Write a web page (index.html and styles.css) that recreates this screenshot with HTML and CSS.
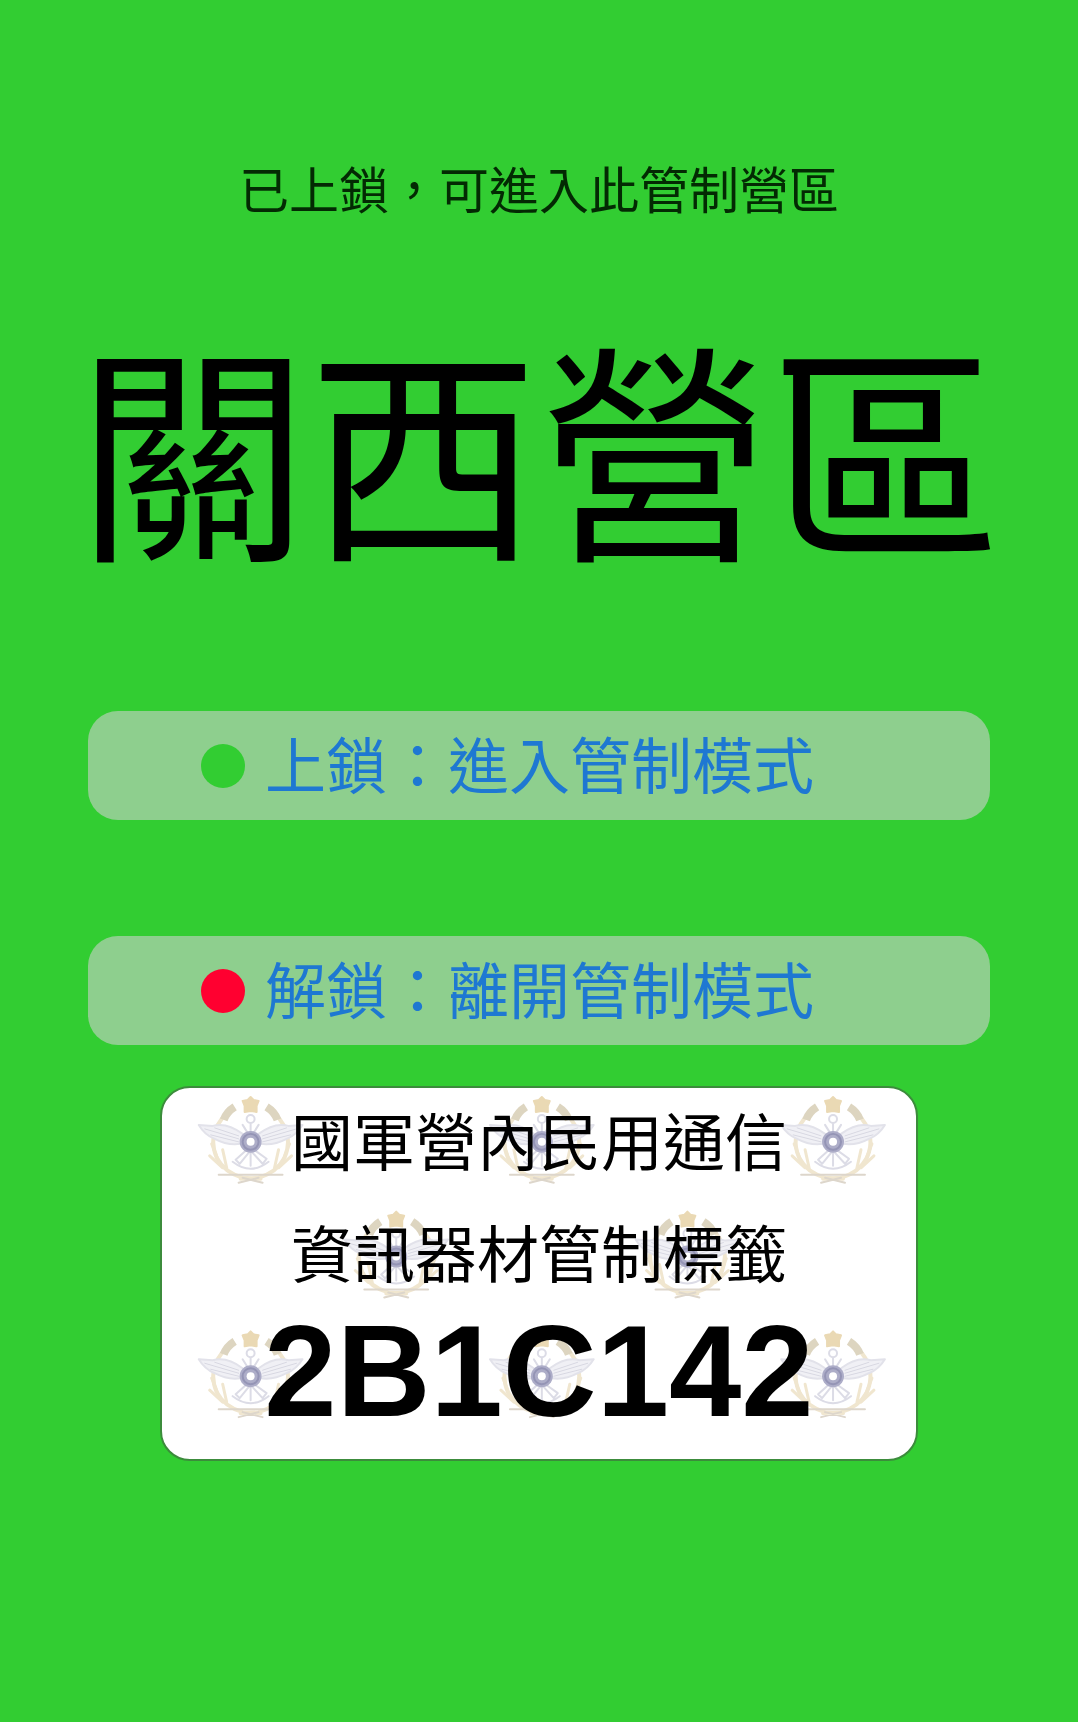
FILE: index.html
```html
<!DOCTYPE html>
<html lang="zh-Hant">
<head>
<meta charset="utf-8">
<meta name="viewport" content="width=device-width, initial-scale=1">
<title>關西營區</title>
<link rel="stylesheet" href="styles.css">
</head>
<body>
<main class="screen">
  <p class="status">已上鎖，可進入此管制營區</p>
  <h1 class="camp">關西營區</h1>
  <div class="actions">
    <button class="action" type="button"><span class="dot dot-locked"></span><span class="action-text">上鎖：進入管制模式</span></button>
    <button class="action" type="button"><span class="dot dot-open"></span><span class="action-text">解鎖：離開管制模式</span></button>
  </div>
  <section class="label">
    <svg class="pattern" viewBox="0 0 752 372" aria-hidden="true">
      <defs>
        <g id="emblem" fill="none" stroke-linecap="round" stroke-linejoin="round">
          <!-- wreath -->
          <g stroke="#f0e6cf" stroke-width="4">
            <path d="M-29-23Q-43-5-34 16Q-26 31-8 36L10 37M29-23Q43-5 34 16Q26 31 8 36L-10 37"/>
            <path d="M-39 2l6 15M-41 14l13 12M-28 8l4 18M39 2l-6 15M41 14L28 26M28 8l-4 18" stroke-width="3"/>
            <path d="M-32 33H32M-8 36l20 5M8 36l-20 5" stroke-width="2" stroke="#ddd6cb"/>
          </g>
          <path d="M-27-22q3-8 11-13M27-22q-3-8-11-13" stroke="#ddd5c0" stroke-width="8" stroke-linecap="butt"/>
          <path d="M0-45l3 3 5 1-2 5 0 6-6-1-6 1 0-6-2-5 5-1z" fill="#ead9b4" stroke="#ead9b4" stroke-width="2"/>
          <!-- wings -->
          <path d="M-8-8Q-24-20-38-16L-52-17Q-46-7-36-3Q-23 4-10 2M8-8Q24-20 38-16L52-17Q46-7 36-3Q23 4 10 2" fill="#f0f0f5" stroke="#e2e2ea" stroke-width="2"/>
          <path d="M-46-13l34 10M-36-14l24 8M-40-7l28 7M46-13l-34 10M36-14l-24 8M40-7l-28 7" stroke="#d8d8e2"/>
          <!-- anchor and propeller -->
          <g stroke="#dcdce6" stroke-width="2">
            <circle cx="0" cy="-23" r="4"/>
            <path d="M0-18v8M-8-17l5 8M8-17l-5 8M-5 9l-10 9 4 4 9-11M5 9l11 8-4 5L2 11M0 10v14M-18 20Q0 34 18 20"/>
          </g>
          <circle r="11" fill="#adadc8"/>
          <circle r="8" stroke="#9494b5" stroke-width="2"/>
          <circle r="4" fill="#fff"/>
        </g>
      </defs>
      <use href="#emblem" x="87" y="54"/>
      <use href="#emblem" x="379" y="54"/>
      <use href="#emblem" x="671" y="54"/>
      <use href="#emblem" x="233" y="169"/>
      <use href="#emblem" x="525" y="169"/>
      <use href="#emblem" x="87" y="289"/>
      <use href="#emblem" x="379" y="289"/>
      <use href="#emblem" x="671" y="289"/>
    </svg>
    <p class="label-line">國軍營內民用通信</p>
    <p class="label-line">資訊器材管制標籤</p>
    <p class="code">2B1C142</p>
  </section>
</main>
</body>
</html>
```
FILE: styles.css
```css
* {
  box-sizing: border-box;
}

body {
  margin: 0;
  min-height: 100vh;
  background: #32cd32;
  color: #000;
  font-family: "Noto Sans CJK TC", sans-serif;
}

.screen {
  padding: 157px 88px 80px;
}

.status {
  margin: 0;
  color: #032a03;
  font-size: 50px;
  line-height: 60px;
  text-align: center;
  white-space: nowrap;
}

.camp {
  display: flex;
  justify-content: center;
  margin: 106px 0 0;
  font-size: 231px;
  font-weight: 400;
  line-height: 240px;
  white-space: nowrap;
}

.actions {
  display: grid;
  gap: 116px;
  margin-top: 148px;
}

.action {
  display: flex;
  align-items: center;
  gap: 20px;
  width: 100%;
  height: 109px;
  padding: 0 113px;
  border: 0;
  border-radius: 30px;
  background: #8ecf8e;
  color: #1e78d2;
  font: inherit;
  font-size: 61px;
  line-height: 72px;
  white-space: nowrap;
  cursor: pointer;
}

.action-text {
  padding-bottom: 6px;
}

.dot {
  flex: none;
  width: 44px;
  height: 44px;
  border-radius: 50%;
}

.dot-locked {
  background: #32cd32;
}

.dot-open {
  background: #ff0030;
}

.label {
  position: relative;
  width: 84%;
  margin: 41px auto 0;
  padding: 11px 0 32px;
  border: 2px solid #3c8c3c;
  border-radius: 30px;
  background: #fff;
  text-align: center;
  white-space: nowrap;
}

.pattern {
  position: absolute;
  inset: 0;
  width: 100%;
  height: 100%;
}

.label-line,
.code {
  position: relative;
  margin: 0;
}

.label-line {
  font-size: 62px;
  line-height: 80px;
}

.label-line + .label-line {
  margin: 32px 0 24px;
}

.code {
  font-family: "Liberation Sans", Arial, sans-serif;
  font-size: 130px;
  font-weight: 700;
  line-height: 112px;
}
```
